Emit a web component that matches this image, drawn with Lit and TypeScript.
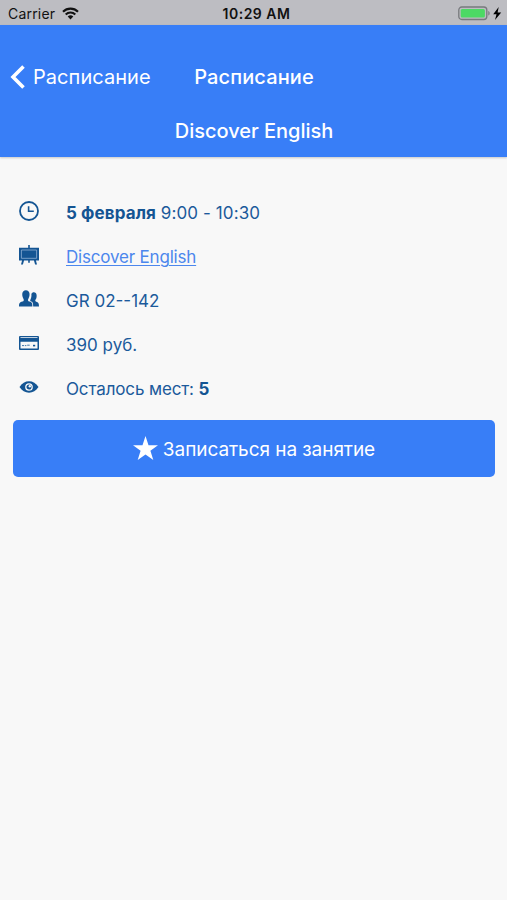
import { LitElement, html, svg, css } from "lit";
import { customElement } from "lit/decorators.js";

const clock = svg`<circle cx="10" cy="10" r="9" fill="none" stroke="currentColor" stroke-width="1.800"/><path d="M9.600 5.200v5.100h5.200" fill="none" stroke="currentColor" stroke-width="1.600"/>`;
const easel = svg`<path d="M9.200 0h1.600v3H9.200zM0 2.700h20v12.800H0zM3.200 15h2l-1.300 4.500H2zM14.800 15h2l1.200 4.500h-1.900zM9.200 15h1.600v2.800H9.200z" fill="currentColor"/><path d="M2.400 5h15.200v8.300H2.400z" fill="none" stroke="#8fb0d4" stroke-width=".8"/>`;
const people = svg`<path d="M14.200 17.400H20c0-3.300-.7-3.900-2.700-4.600-1.300-.4-1.200-1.400-.7-2.200.9-1.300 1.200-3 1-4.700-.2-1.600-1.200-2.600-2.700-2.600-1.200 0-2.100.6-2.500 1.700.2 2.500-.2 4.100-1.100 5.900-.3.800 0 1.300 1 1.600 1.600.6 1.800 2 1.900 4.900z" fill="currentColor"/><path d="M0 17.400c0-3.400.9-4.100 3.400-4.900 1.500-.5 1.700-1.500 1.100-2.600C3.500 8.200 3.100 6.500 3.300 4.600 3.500 2.500 4.800 1.200 6.900 1.200s3.400 1.300 3.600 3.400c.2 1.900-.2 3.600-1.200 5.300-.6 1.100-.4 2.100 1.100 2.600 2.500.8 3 1.500 3 4.900z" fill="currentColor"/>`;
const card = svg`<path d="M1.300 3h17.400c.8 0 1.300.5 1.300 1.300v11.400c0 .8-.5 1.300-1.300 1.300H1.300C.5 17 0 16.500 0 15.700V4.300C0 3.500.5 3 1.300 3zm.2 1.200v.8h17v-.8zm0 4.600v6.800h17V8.800z" fill="currentColor" fill-rule="evenodd"/><path d="M3 12.600h2.200M6 12.600h1.400M8.200 12.200h2.500" stroke="currentColor" stroke-width=".8"/><path d="M14 11.800h2.200v1.600H14z" fill="currentColor"/>`;
const eye = svg`<path d="M.5 10C3 6.300 6.200 4.300 10 4.300S17 6.300 19.500 10C17 13.700 13.800 15.700 10 15.700S3 13.700.5 10z" fill="currentColor"/><circle cx="10" cy="10" r="3.200" fill="none" stroke="#f8f8f8" stroke-width="1.300"/><circle cx="10.800" cy="9.200" r="1.200" fill="#f8f8f8"/>`;

@customElement("app-root")
export class AppRoot extends LitElement {
  static styles = css`
    :host { display: flex; flex-direction: column; height: 900px; background: #f8f8f8; color: #1b5a9b; font-family: Inter, "Liberation Sans", sans-serif; overflow: hidden; }
    svg { display: block; flex: none; }
    .status { display: grid; grid-template-columns: 1fr auto 1fr; align-items: center; height: 25px; box-sizing: border-box; padding: 2px 5px 0 8px; background: #bdbdc2; color: #111; font-size: 14px; }
    .carrier { display: flex; align-items: center; gap: 7px; letter-spacing: .2px; }
    .time { font-weight: 600; letter-spacing: .5px; margin-left: 3px; }
    .power { display: flex; justify-content: flex-end; }
    header { height: 132px; box-sizing: border-box; padding-top: 25px; background: #387ef7; color: #fff; font-size: 20px; box-shadow: 0 1px 2px #0003; }
    .nav { display: grid; grid-template-columns: 1fr auto 1fr; align-items: center; height: 53px; }
    .back { display: flex; align-items: center; gap: 8px; padding-left: 10px; letter-spacing: .05px; }
    .title { font-weight: 500; letter-spacing: .1px; margin-left: 1px; }
    .subtitle { text-align: center; font-weight: 500; line-height: 56px; padding-left: 1px; letter-spacing: -.03px; }
    .details { display: flex; flex-direction: column; padding: 34px 19px 0; }
    .row { display: flex; align-items: center; gap: 27px; height: 44px; font-size: 17px; }
    .row svg { margin-top: -4px; color: #145593; }
    .date { letter-spacing: .1px; }
    .seats { letter-spacing: -.13px; }
    b { font-weight: 700; color: #145593; }
    .link { color: #4c87ed; letter-spacing: -.19px; text-decoration: underline; text-underline-offset: 2px; text-decoration-thickness: 1px; }
    .book { display: flex; align-items: center; justify-content: center; gap: 5px; height: 57px; margin: 9px 12px 0 13px; padding: 0; border: 0; border-radius: 5px; background: #387ef7; color: #fff; font: 19px Inter, "Liberation Sans", sans-serif; letter-spacing: -.06px; }
    .book span { padding-top: 2px; }
    .book svg { margin-top: -1px; }
  `;

  row(icon: unknown, content: unknown) {
    return html`<div class="row"><svg width="20" height="20" viewBox="0 0 20 20">${icon}</svg><span>${content}</span></div>`;
  }

  render() {
    return html`
      <div class="status">
        <div class="carrier"><span>Carrier</span>
          <svg width="17" height="13" viewBox="0 0 17 13"><path d="M1 4.700a10.700 10.700 0 0 1 15 0M3.700 7.500a6.900 6.900 0 0 1 9.600 0" fill="none" stroke="#111" stroke-width="2.100"/><path d="M5.700 9.500a4 4 0 0 1 5.600 0L8.500 12.400z" fill="#111"/></svg>
        </div>
        <span class="time">10:29 AM</span>
        <div class="power"><svg width="44" height="16" viewBox="0 0 44 16"><rect x=".8" y="1" width="28" height="12.500" rx="3" fill="none" stroke="#77797d" stroke-width="1.300"/><rect x="2.700" y="2.900" width="24.200" height="8.700" rx="1.500" fill="#4cd964"/><path d="M30.300 5c1.800.7 1.800 4 0 4.600z" fill="#77797d"/><path d="M40.700 1 35.200 8.200h3.300L37 14l6.200-7.600h-3.600z" fill="#000"/></svg></div>
      </div>
      <header>
        <div class="nav">
          <div class="back"><svg width="15" height="24" viewBox="0 0 15 24"><path d="M13.500 1.500 3 12l10.500 10.500" fill="none" stroke="#fff" stroke-width="3.600"/></svg><span>Расписание</span></div>
          <span class="title">Расписание</span>
        </div>
        <div class="subtitle">Discover English</div>
      </header>
      <div class="details">
        ${this.row(clock, html`<span class="date"><b>5 февраля</b> 9:00 - 10:30</span>`)}
        ${this.row(easel, html`<span class="link">Discover English</span>`)}
        ${this.row(people, "GR 02--142")}
        ${this.row(card, "390 руб.")}
        ${this.row(eye, html`<span class="seats">Осталось мест: <b>5</b></span>`)}
      </div>
      <button class="book"><svg width="25" height="25" viewBox="0 0 25 25"><path d="M12.500 0l3 9.200H25l-7.600 5.600 2.900 9.200-7.800-5.600L4.700 24l2.900-9.200L0 9.200h9.500z" fill="#fff"/></svg><span>Записаться на занятие</span></button>
    `;
  }
}
